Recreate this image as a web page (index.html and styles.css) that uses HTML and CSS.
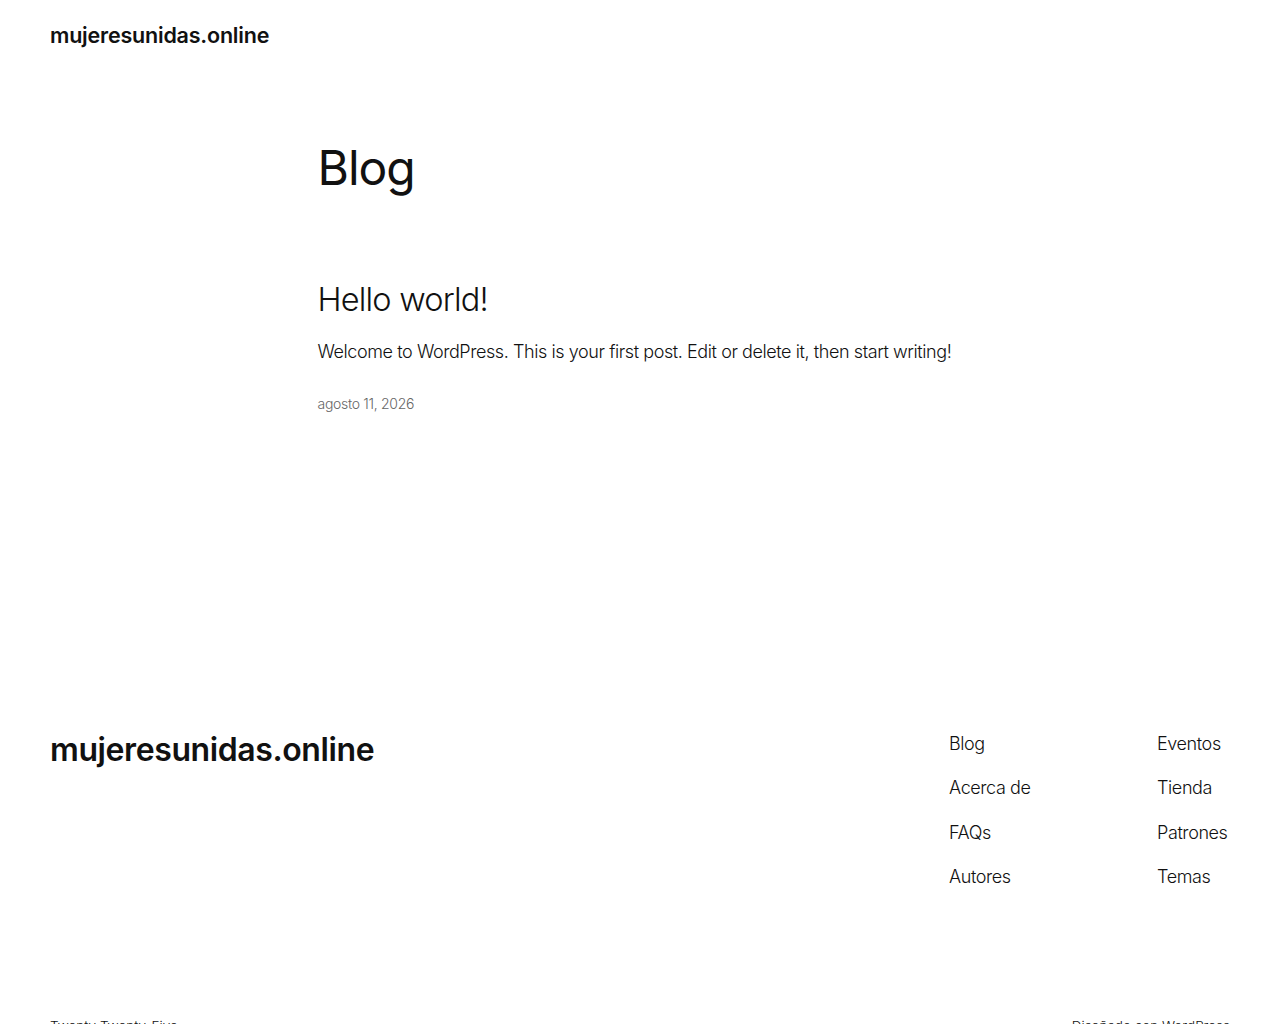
FILE: index.html
```html
<!DOCTYPE html>
<html lang="es">
<head>
<meta charset="utf-8">
<title>Blog – mujeresunidas.online</title>
<link rel="stylesheet" href="styles.css">
</head>
<body>
<header class="site-header">
  <p class="site-title">mujeresunidas.online</p>
</header>
<main class="site-main">
  <h1 class="page-title">Blog</h1>
  <article class="post">
    <h2 class="post-title">Hello world!</h2>
    <p class="post-excerpt">Welcome to WordPress. This is your first post. Edit or delete it, then start writing!</p>
    <p class="post-date">agosto 11, 2026</p>
  </article>
</main>
<footer class="site-footer">
  <div class="footer-top">
    <p class="footer-title">mujeresunidas.online</p>
    <nav class="footer-nav">
      <ul class="nav-col">
        <li>Blog</li>
        <li>Acerca de</li>
        <li>FAQs</li>
        <li>Autores</li>
      </ul>
      <ul class="nav-col">
        <li>Eventos</li>
        <li>Tienda</li>
        <li>Patrones</li>
        <li>Temas</li>
      </ul>
    </nav>
  </div>
  <div class="footer-bottom">
    <p>Twenty Twenty-Five</p>
    <p>Diseñado con WordPress</p>
  </div>
</footer>
</body>
</html>
```
FILE: styles.css
```css
html, body {
  margin: 0;
  padding: 0;
  background: #ffffff;
  color: #111111;
  font-family: Inter, "Open Sans", sans-serif;
}
p, h1, h2, ul {
  margin: 0;
  padding: 0;
}
.site-header {
  padding: 20px 50px 0;
}
.site-title {
  font-size: 21.5px;
  line-height: 30px;
  font-weight: 600;
  letter-spacing: -0.2px;
}
.site-main {
  width: 645px;
  margin: 0 auto;
  padding-top: 87px;
}
.page-title {
  font-size: 48px;
  line-height: 62px;
  font-weight: 400;
  letter-spacing: -1px;
}
.post {
  margin-top: 79px;
}
.post-title {
  font-size: 32.5px;
  line-height: 44px;
  font-weight: 300;
  letter-spacing: -0.8px;
}
.post-excerpt {
  margin-top: 16px;
  font-size: 18px;
  line-height: 28px;
  font-weight: 300;
  letter-spacing: -0.42px;
}
.post-date {
  margin-top: 28px;
  font-size: 14px;
  line-height: 20px;
  font-weight: 300;
  color: #666666;
  letter-spacing: -0.3px;
}
.site-footer {
  margin-top: 316px;
  padding: 0 50px;
}
.footer-top {
  display: flex;
  justify-content: space-between;
  align-items: flex-start;
}
.footer-title {
  font-size: 32px;
  line-height: 40px;
  font-weight: 600;
  letter-spacing: -0.4px;
}
.footer-nav {
  display: flex;
  margin-right: -50px;
}
.nav-col {
  list-style: none;
  width: 208px;
  display: flex;
  flex-direction: column;
  gap: 16.3px;
}
.nav-col:last-child {
  width: 123px;
}
.nav-col li {
  font-size: 18px;
  line-height: 28px;
  font-weight: 300;
  letter-spacing: -0.4px;
}
.footer-bottom {
  display: flex;
  justify-content: space-between;
  margin-top: 125px;
  font-size: 13.5px;
  line-height: 20px;
  font-weight: 300;
}
```
